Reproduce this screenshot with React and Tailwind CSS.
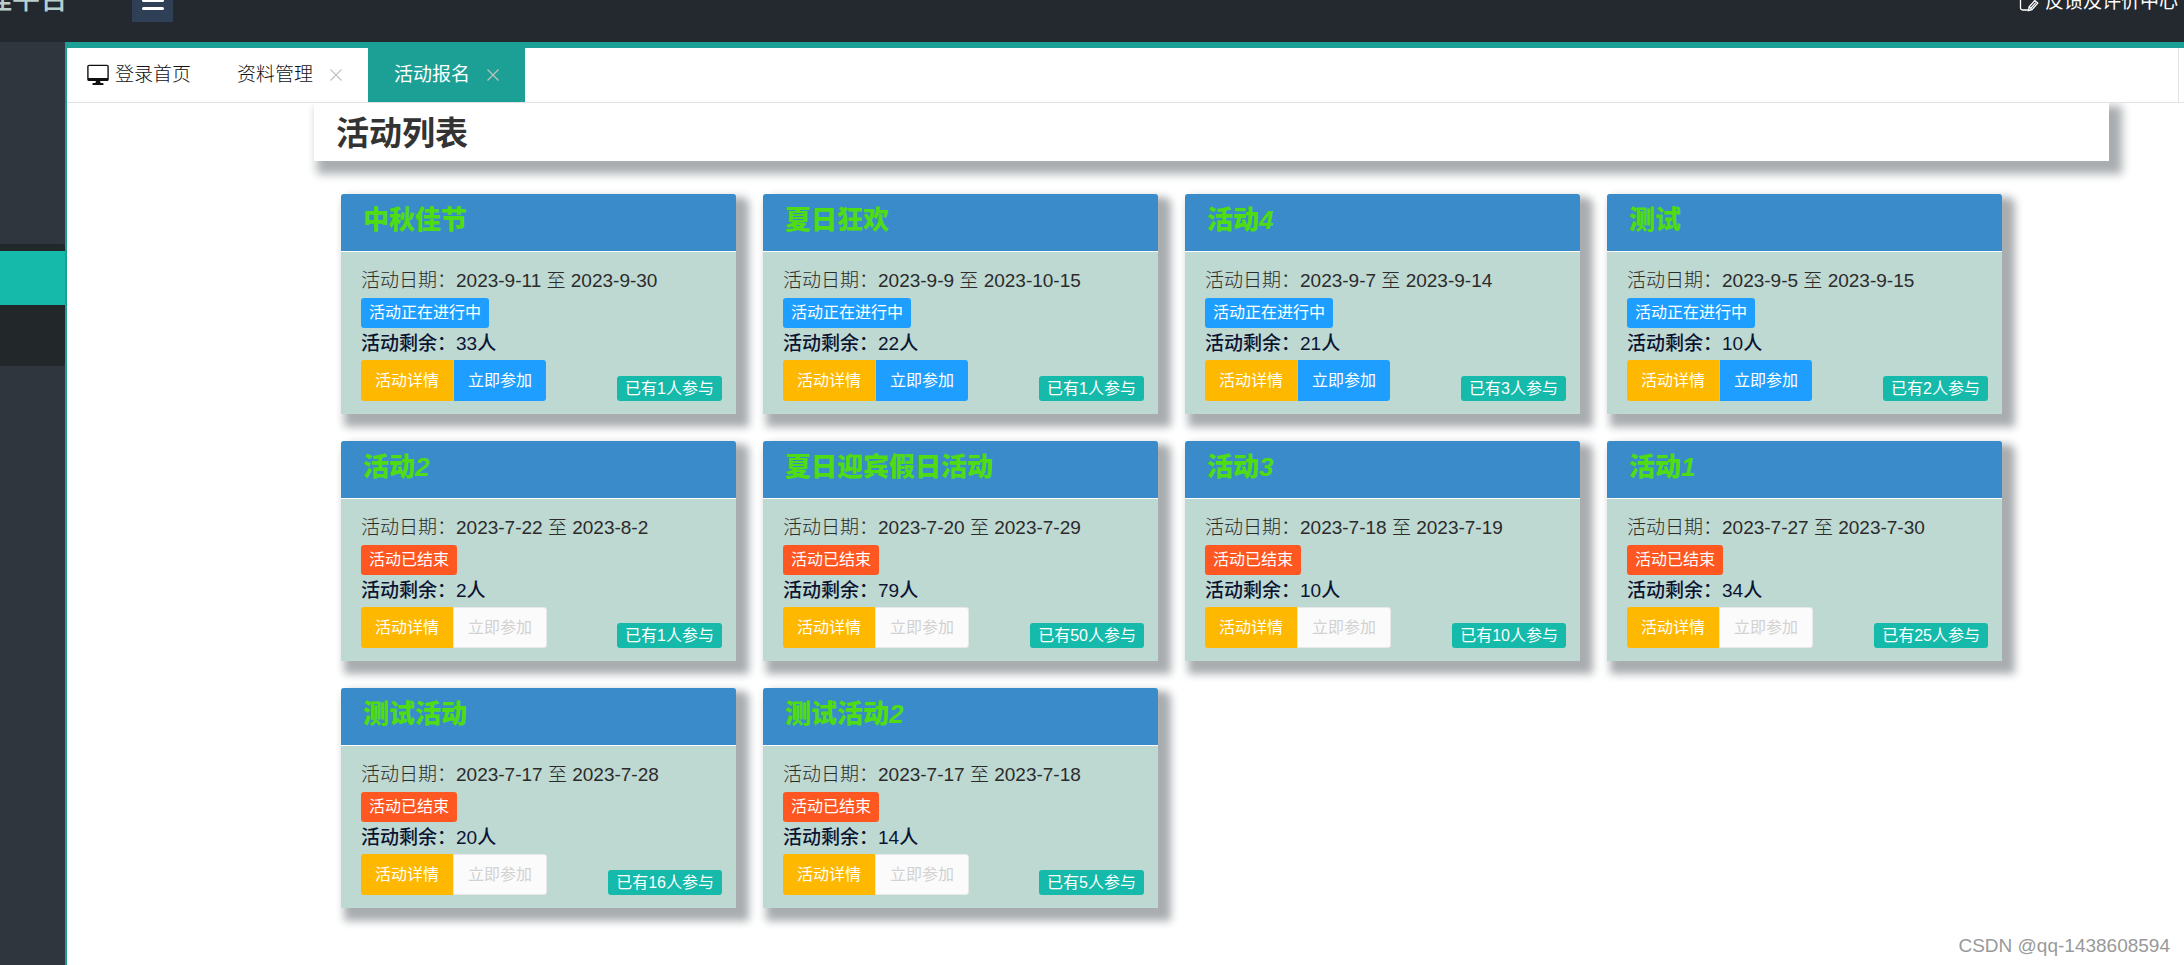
const activities = [
  { title: "中秋佳节", from: "2023-9-11", to: "2023-9-30", open: true, left: 33, joined: 1 },
  { title: "夏日狂欢", from: "2023-9-9", to: "2023-10-15", open: true, left: 22, joined: 1 },
  { title: "活动", number: 4, from: "2023-9-7", to: "2023-9-14", open: true, left: 21, joined: 3 },
  { title: "测试", from: "2023-9-5", to: "2023-9-15", open: true, left: 10, joined: 2 },
  { title: "活动", number: 2, from: "2023-7-22", to: "2023-8-2", open: false, left: 2, joined: 1 },
  { title: "夏日迎宾假日活动", from: "2023-7-20", to: "2023-7-29", open: false, left: 79, joined: 50 },
  { title: "活动", number: 3, from: "2023-7-18", to: "2023-7-19", open: false, left: 10, joined: 10 },
  { title: "活动", number: 1, from: "2023-7-27", to: "2023-7-30", open: false, left: 34, joined: 25 },
  { title: "测试活动", from: "2023-7-17", to: "2023-7-28", open: false, left: 20, joined: 16 },
  { title: "测试活动", number: 2, from: "2023-7-17", to: "2023-7-18", open: false, left: 14, joined: 5 },
];

function MonitorIcon() {
  return (
    <svg className="h-[22px] w-[22px]" viewBox="0 0 22 22" fill="none" aria-hidden="true">
      <rect x="0.9" y="1.4" width="20.2" height="15" rx="1.2" stroke="currentColor" strokeWidth="1.4" />
      <path d="M1 14h20v1.8a1 1 0 0 1-1 1H2a1 1 0 0 1-1-1z" fill="currentColor" />
      <path d="M9 16.5h4l.5 2.3h-5zM5.5 19.4c1.5-.8 9.500-.8 11 0v1.600h-11z" fill="currentColor" />
    </svg>
  );
}

function EditIcon() {
  return (
    <svg className="h-5 w-5" viewBox="0 0 20 20" fill="none" stroke="currentColor" strokeWidth="1.3" aria-hidden="true">
      <path d="M9 18H3.500a2 2 0 0 1-2-2V4.500a2 2 0 0 1 2-2h11a2 2 0 0 1 2 2V7" />
      <path d="M15.800 8.500l3 2.600-5.800 6.500-3.500.9.600-3.600zM11.800 16.200l5-5.600M10.200 15l2.800 2.500" />
    </svg>
  );
}

function CloseIcon() {
  return (
    <svg className="h-3 w-3" viewBox="0 0 12 12" stroke="currentColor" strokeWidth="1.2" aria-hidden="true">
      <path d="M0.5 0.5l11 11M11.5 0.5l-11 11" />
    </svg>
  );
}

function ActivityCard({ item }) {
  return (
    <article className="rounded-t-[3px] bg-[#bed8d2] shadow-[8px_8px_9px_5px_#a9adb0]">
      <h2 className="flex h-[58px] items-center rounded-t-[3px] border-b border-white bg-[#398bca] px-[22px] pb-1 text-[26px] font-black text-[#4fdc14]">
        {item.title}
        {item.number && <span className="italic">{item.number}</span>}
      </h2>
      <div className="px-5 pt-[14px] pb-[13px]">
        <p className="mb-[2px] text-[19px] leading-[30px] font-light text-[#2b2b2b]">
          活动日期：{item.from} 至 {item.to}
        </p>
        <span
          className={
            "flex h-[30px] w-fit items-center rounded-[3px] px-2 text-base text-white " +
            (item.open ? "bg-[#1e9fff]" : "bg-[#ff5722]")
          }
        >
          {item.open ? "活动正在进行中" : "活动已结束"}
        </span>
        <p className="text-[19px] leading-8 font-medium text-[#0c1433]">活动剩余：{item.left}人</p>
        <div className="flex items-end justify-between">
          <div className="flex">
            <button className="h-[41px] rounded-l-[3px] bg-[#ffb800] px-[14px] text-base text-white">活动详情</button>
            {item.open ? (
              <button className="h-[41px] rounded-r-[3px] border-l border-white/50 bg-[#1e9fff] px-[14px] text-base text-white">
                立即参加
              </button>
            ) : (
              <button disabled className="h-[41px] rounded-r-[3px] border border-[#e8e8e8] bg-[#fbfbfb] px-[14px] text-base text-[#d2d2d2]">
                立即参加
              </button>
            )}
          </div>
          <span className="-mr-[6px] flex h-[25px] items-center rounded-[3px] bg-[#16baaa] px-2 text-base text-white">
            已有{item.joined}人参与
          </span>
        </div>
      </div>
    </article>
  );
}

export default function App() {
  return (
    <div className="relative flex min-h-screen flex-col overflow-hidden bg-white font-['Liberation_Sans','Noto_Sans_CJK_SC',sans-serif]">
      <header className="flex h-[42px] items-start justify-between overflow-hidden bg-[#24282f] pr-[6px] text-white">
        <div className="-mt-5 flex">
          <div className="flex w-[132px] justify-end pr-[64px] text-[28px] leading-10 font-medium whitespace-nowrap text-[#b9cfcd]">
            管理平台
          </div>
          <button aria-label="菜单" className="flex h-[42px] w-[41px] flex-col items-center gap-[5px] bg-[#2f4056] pt-[11px]">
            <span className="h-[3px] w-[22px] rounded-sm bg-white" />
            <span className="h-[3px] w-[22px] rounded-sm bg-white" />
            <span className="h-[3px] w-[22px] rounded-sm bg-white" />
          </button>
        </div>
        <a href="#feedback" className="-mt-3 flex items-center gap-[6px] text-[19px] leading-7">
          <EditIcon />
          反馈及评价中心
        </a>
      </header>
      <div className="flex grow">
        <aside className="w-[65px] shrink-0 bg-[#2f363e] pt-[202px]">
          <div className="rounded-r-[3px] bg-[#22272a] pt-[7px] pb-[61px]">
            <a href="#activity" aria-label="活动报名" className="block h-[54px] bg-[#16baaa]" />
          </div>
        </aside>
        <main className="min-w-0 grow border-l-2 border-[#1c9f95]">
          <nav className="flex h-[61px] border-t-6 border-b border-t-[#1c9f95] border-b-[#e2e2e2] text-[19px] text-[#111]">
            <a href="#home" className="flex items-center gap-[6px] px-5 font-light">
              <MonitorIcon />
              登录首页
            </a>
            <div className="flex items-center gap-[17px] px-[26px]">
              <a href="#docs" className="font-light">资料管理</a>
              <button aria-label="关闭资料管理" className="text-[#c2c2c2]"><CloseIcon /></button>
            </div>
            <div className="flex items-center gap-[17px] bg-[#1c9f95] px-[26px] text-white">
              <a href="#activity">活动报名</a>
              <button aria-label="关闭活动报名" className="text-[#c2c2c2]"><CloseIcon /></button>
            </div>
            <div className="mr-[5px] grow border-r border-[#e2e2e2]" />
          </nav>
          <div className="overflow-hidden pr-[75px] pb-14 pl-[247px]">
            <h1 className="flex h-[58px] items-center px-[22px] pt-1 text-[33px] font-bold text-[#333] shadow-[8px_8px_9px_5px_#a9adb0]">
              活动列表
            </h1>
            <section className="mt-[33px] grid grid-cols-4 gap-[27px] pr-[107px] pl-[27px]">
              {activities.map((item) => (
                <ActivityCard key={item.from + item.to} item={item} />
              ))}
            </section>
          </div>
        </main>
      </div>
      <p className="absolute right-[14px] bottom-[5px] text-[19px] leading-7 text-[#999]">CSDN @qq-1438608594</p>
    </div>
  );
}
